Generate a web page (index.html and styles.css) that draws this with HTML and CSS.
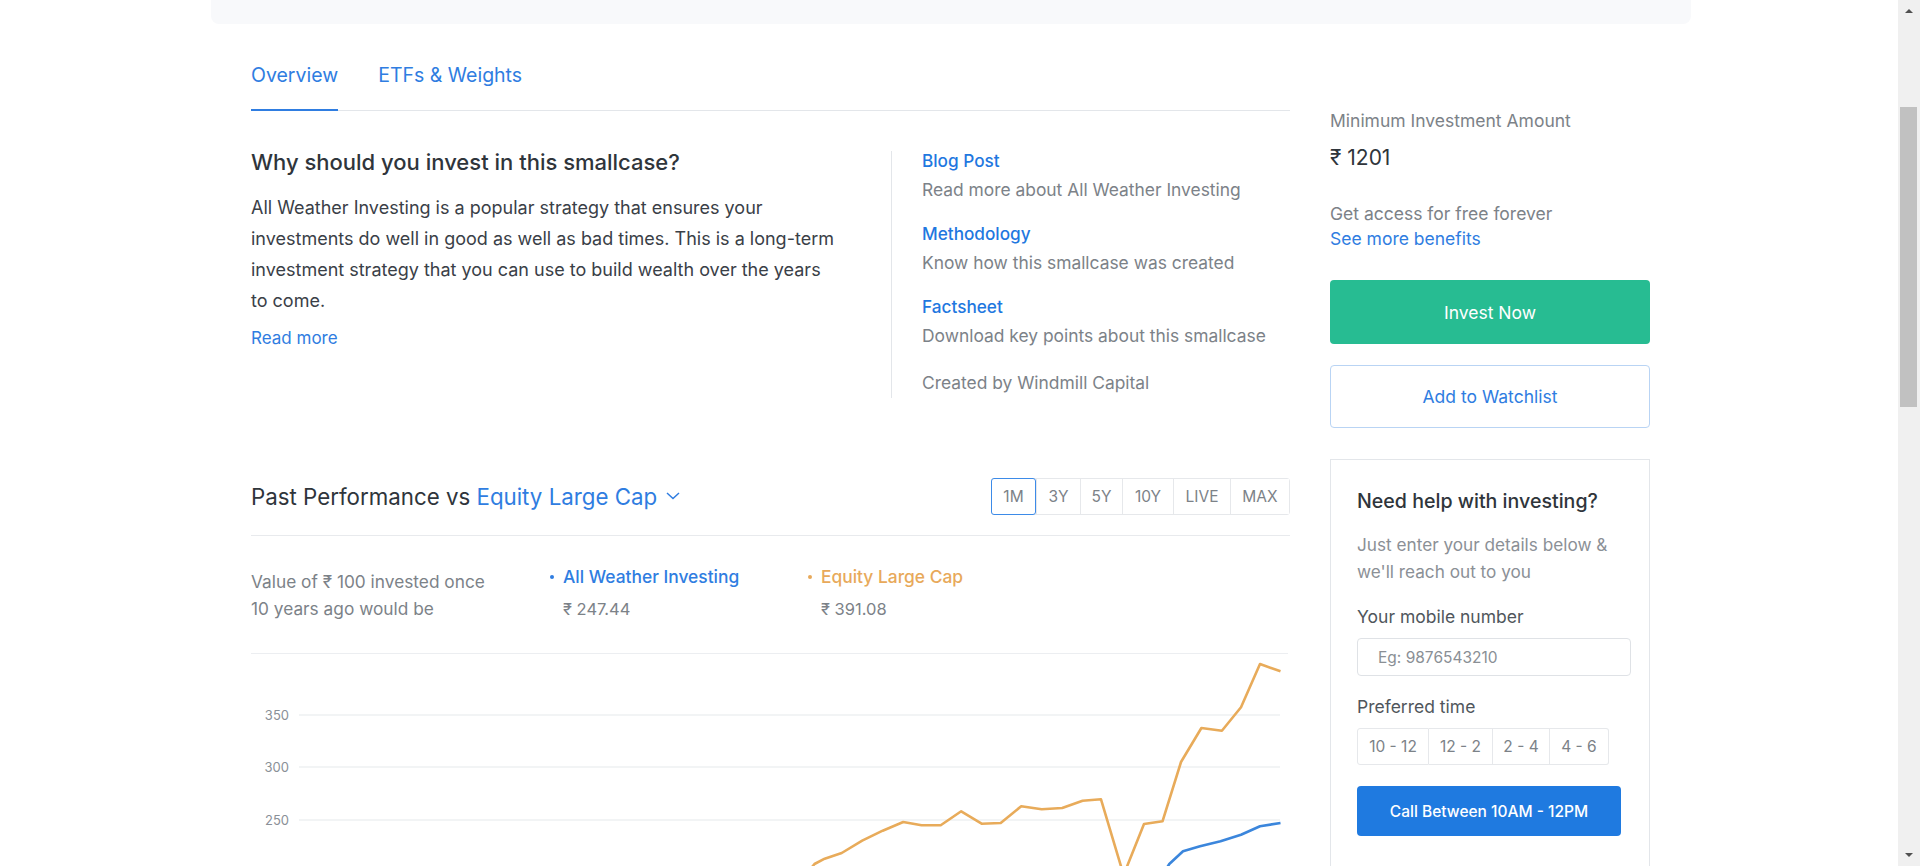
FILE: index.html
```html
<!DOCTYPE html>
<html lang="en">
<head>
<meta charset="utf-8">
<title>All Weather Investing</title>
<link rel="stylesheet" href="styles.css">
</head>
<body>
<div class="viewport">
  <div class="container">
    <div class="topbar"></div>
    <div class="layout">
      <main class="main">
        <nav class="tabs">
          <a class="tab active">Overview</a>
          <a class="tab">ETFs &amp; Weights</a>
        </nav>

        <section class="why">
          <div class="why-left">
            <h2 class="why-title">Why should you invest in this smallcase?</h2>
            <p class="why-text">All Weather Investing is a popular strategy that ensures your<br>investments do well in good as well as bad times. This is a long-term<br>investment strategy that you can use to build wealth over the years<br>to come.</p>
            <a class="read-more">Read more</a>
          </div>
          <div class="why-right">
            <div class="info">
              <a class="info-title">Blog Post</a>
              <div class="info-desc">Read more about All Weather Investing</div>
            </div>
            <div class="info">
              <a class="info-title">Methodology</a>
              <div class="info-desc">Know how this smallcase was created</div>
            </div>
            <div class="info">
              <a class="info-title">Factsheet</a>
              <div class="info-desc">Download key points about this smallcase</div>
            </div>
            <div class="created">Created by Windmill Capital</div>
          </div>
        </section>

        <section class="perf">
          <div class="perf-head">
            <h3 class="perf-title">Past Performance vs <span class="bench">Equity Large Cap<svg class="chev" width="14" height="8" viewBox="0 0 14 8"><polyline points="1,1 7,6.5 13,1" fill="none" stroke="#2f7de1" stroke-width="1.5"/></svg></span></h3>
            <div class="periods">
              <button class="period active">1M</button>
              <button class="period">3Y</button>
              <button class="period">5Y</button>
              <button class="period">10Y</button>
              <button class="period">LIVE</button>
              <button class="period">MAX</button>
            </div>
          </div>
          <div class="stats">
            <div class="stats-label">Value of ₹ 100 invested once<br>10 years ago would be</div>
            <div class="legend">
              <div class="legend-name blue"><span class="dot"></span>All Weather Investing</div>
              <div class="legend-val">₹ 247.44</div>
            </div>
            <div class="legend">
              <div class="legend-name orange"><span class="dot"></span>Equity Large Cap</div>
              <div class="legend-val">₹ 391.08</div>
            </div>
          </div>
          <div class="chart">
            <svg width="1039" height="240" viewBox="0 0 1039 240">
              <line x1="0" y1="0.5" x2="1037" y2="0.5" stroke="#eceef1" stroke-width="1"/>
              <line x1="48" y1="62" x2="1029" y2="62" stroke="#eef0f2" stroke-width="1.5"/>
              <line x1="48" y1="114" x2="1029" y2="114" stroke="#eef0f2" stroke-width="1.5"/>
              <line x1="48" y1="167" x2="1029" y2="167" stroke="#eef0f2" stroke-width="1.5"/>
              <text class="axis" x="38" y="66.5" text-anchor="end">350</text>
              <text class="axis" x="38" y="118.5" text-anchor="end">300</text>
              <text class="axis" x="38" y="171.5" text-anchor="end">250</text>
              <polyline fill="none" stroke="#e8ab5a" stroke-width="2.6" stroke-linejoin="round" points="540,240 563.5,211 573.7,205.7 590.7,200 611.2,187.7 631.7,177.7 652.2,169 670.6,172.3 689.7,172.3 710.2,158.3 730.6,170.7 749.7,170 770.2,153.3 790.7,156.3 811.2,155 831.6,147.7 850,146.3 872.6,222 893,171 911.5,168.3 930,109 950.4,75 970.9,77.7 990,54.3 1009,11 1029.5,18.3"/>
              <polyline fill="none" stroke="#3b86dc" stroke-width="2.6" stroke-linejoin="round" points="900,240 918.3,211 932,198.3 949,193.3 969.5,188.3 990,181.7 1009,173.3 1029.5,170"/>
            </svg>
          </div>
        </section>
      </main>

      <aside class="side">
        <div class="min-label">Minimum Investment Amount</div>
        <div class="min-amount">₹ 1201</div>
        <div class="access">Get access for free forever</div>
        <a class="benefits">See more benefits</a>
        <button class="btn-invest">Invest Now</button>
        <button class="btn-watch">Add to Watchlist</button>

        <div class="help">
          <h4 class="help-title">Need help with investing?</h4>
          <p class="help-text">Just enter your details below &amp;<br>we'll reach out to you</p>
          <label class="help-label">Your mobile number</label>
          <input class="help-input" type="text" placeholder="Eg: 9876543210">
          <div class="help-label time-label">Preferred time</div>
          <div class="times">
            <button class="time t1">10 - 12</button>
            <button class="time t2">12 - 2</button>
            <button class="time t3">2 - 4</button>
            <button class="time t4">4 - 6</button>
          </div>
          <button class="btn-call">Call Between 10AM - 12PM</button>
        </div>
      </aside>
    </div>
  </div>
</div>

<div class="scrollbar">
  <span class="arrow up"></span>
  <span class="thumb"></span>
  <span class="arrow down"></span>
</div>
</body>
</html>
```

FILE: styles.css
```css
* { box-sizing: border-box; }

html, body {
  margin: 0;
  padding: 0;
  height: 100%;
  overflow: hidden;
  background: #ffffff;
}

body {
  font-family: "Inter", "Liberation Sans", Arial, sans-serif;
  color: #2f353b;
}

.viewport {
  margin-right: 18px;
}

.container {
  width: 1480px;
  margin: 0 auto;
}

.topbar {
  height: 24px;
  background: #f8f9fb;
  border-radius: 0 0 8px 8px;
}

.layout {
  display: flex;
  align-items: flex-start;
  gap: 40px;
  padding: 39px 40px 0 40px;
}

.main {
  width: 1039px;
  flex: 0 0 1039px;
}

/* Tabs */
.tabs {
  display: flex;
  gap: 40px;
  border-bottom: 1px solid #e3e6ea;
}

.tab {
  font-size: 19.5px;
  line-height: 24px;
  color: #2f7de1;
  padding-bottom: 22px;
  border-bottom: 2px solid transparent;
  margin-bottom: -1px;
  cursor: pointer;
}

.tab.active {
  border-bottom-color: #2f7de1;
}

/* Why section */
.why {
  display: flex;
  padding-top: 40px;
}

.why-left {
  flex: 0 0 640px;
  padding-right: 30px;
}

.why-title {
  margin: 0;
  font-size: 22px;
  line-height: 22px;
  font-weight: 500;
  color: #2f353b;
}

.why-text {
  margin: 19px 0 0 0;
  font-size: 18px;
  line-height: 31px;
  color: #3a4047;
}

.read-more {
  display: block;
  margin-top: 11px;
  font-size: 17px;
  line-height: 22px;
  color: #2f7de1;
}

.why-right {
  flex: 1;
  border-left: 1px solid #e3e6ea;
  padding-left: 30px;
  padding-bottom: 4px;
}

.info + .info {
  margin-top: 23px;
}

.info-title {
  display: block;
  font-size: 17.2px;
  line-height: 20px;
  font-weight: 500;
  color: #1f78e0;
}

.info-desc {
  margin-top: 8px;
  font-size: 17.4px;
  line-height: 22px;
  color: #7c8288;
}

.created {
  margin-top: 25px;
  font-size: 17.4px;
  line-height: 22px;
  color: #7c8288;
}

/* Performance */
.perf {
  margin-top: 80px;
}

.perf-head {
  display: flex;
  align-items: center;
  justify-content: space-between;
  padding-bottom: 20px;
  border-bottom: 1px solid #e8eaed;
}

.perf-title {
  margin: 0;
  font-size: 22.3px;
  font-weight: 400;
  line-height: 26px;
  color: #2f353b;
}

.bench {
  color: #2f7de1;
}

.chev {
  margin-left: 9px;
  vertical-align: 5px;
}

.periods {
  display: flex;
  border: 1px solid #e6e8eb;
  border-radius: 3px;
  height: 37px;
}

.period {
  font-family: inherit;
  font-size: 15.5px;
  color: #7c8288;
  background: #fff;
  border: none;
  border-left: 1px solid #e6e8eb;
  padding: 0;
  height: 35px;
}

.period:first-child { border-left: none; }
.period:nth-child(2) { width: 44px; }
.period:nth-child(3) { width: 42px; }
.period:nth-child(4) { width: 51px; }
.period:nth-child(5) { width: 57px; }
.period:nth-child(6) { width: 59px; }

.period.active {
  border: 1px solid #3d8be8;
  border-radius: 3px;
  height: 37px;
  margin: -1px 0 -1px -1px;
  width: 45px;
}

.stats {
  display: grid;
  grid-template-columns: 298px 258px auto;
  padding-top: 31.5px;
}

.stats-label {
  font-size: 17.3px;
  line-height: 27px;
  color: #7c8288;
}

.legend-name {
  position: relative;
  padding-left: 14px;
  font-size: 17.4px;
  line-height: 22px;
  font-weight: 500;
  margin-top: -1.5px;
}

.legend-name .dot {
  position: absolute;
  left: 1px;
  top: 9px;
  width: 4px;
  height: 4px;
  border-radius: 50%;
}

.legend-name.blue { color: #2f7de1; }
.legend-name.blue .dot { background: #2f7de1; }
.legend-name.orange { color: #e8a95a; }
.legend-name.orange .dot { background: #e8a95a; }

.legend-val {
  padding-left: 14px;
  margin-top: 10px;
  font-size: 16.5px;
  line-height: 22px;
  color: #7c8288;
}

.chart {
  margin-top: 31px;
  height: 240px;
}

.chart svg { display: block; }

.axis {
  font-family: "Inter", "Liberation Sans", Arial, sans-serif;
  font-size: 13px;
  fill: #8a9097;
}

/* Sidebar */
.side {
  width: 320px;
  flex: 0 0 320px;
  padding-top: 47px;
}

.min-label {
  font-size: 17.5px;
  line-height: 22px;
  color: #7c8288;
}

.min-amount {
  margin-top: 13px;
  font-size: 21px;
  line-height: 26px;
  color: #2f353b;
}

.access {
  margin-top: 31px;
  font-size: 17.5px;
  line-height: 24px;
  color: #7c8288;
}

.benefits {
  display: block;
  font-size: 17.5px;
  line-height: 25px;
  color: #2f7de1;
}

.btn-invest {
  display: block;
  width: 320px;
  height: 64px;
  margin-top: 29px;
  border: none;
  border-radius: 4px;
  background: #27bc92;
  color: #ffffff;
  font-family: inherit;
  font-size: 17.5px;
}

.btn-watch {
  display: block;
  width: 320px;
  height: 63px;
  margin-top: 21px;
  border: 1px solid #b9d4f4;
  border-radius: 4px;
  background: #ffffff;
  color: #2f7de1;
  font-family: inherit;
  font-size: 17.5px;
}

.help {
  margin-top: 31px;
  border: 1px solid #e3e6ea;
  padding: 28px 18px 60px 26px;
}

.help-title {
  margin: 0;
  font-size: 19.6px;
  line-height: 26px;
  font-weight: 500;
  color: #2f353b;
}

.help-text {
  margin: 17px 0 0 0;
  font-size: 17.2px;
  line-height: 27px;
  color: #8b9096;
}

.help-label {
  display: block;
  margin-top: 20px;
  font-size: 17.5px;
  line-height: 24px;
  color: #50565c;
}

.help-input {
  display: block;
  margin-top: 9px;
  width: 274px;
  height: 38px;
  border: 1px solid #dfe2e6;
  border-radius: 4px;
  padding: 0 0 0 20px;
  font-family: inherit;
  font-size: 15.5px;
  color: #2f353b;
  outline: none;
}

.help-input::placeholder {
  color: #8a8f95;
}

.time-label {
  margin-top: 19px;
}

.times {
  display: flex;
  margin-top: 9px;
}

.time {
  height: 37px;
  border: 1px solid #e6e8eb;
  background: #ffffff;
  color: #7c8288;
  font-family: inherit;
  font-size: 15.5px;
  padding: 0;
}

.time + .time { border-left: none; }
.time.t1 { width: 72px; border-radius: 3px 0 0 3px; }
.time.t2 { width: 64px; }
.time.t3 { width: 57px; }
.time.t4 { width: 59px; border-radius: 0 3px 3px 0; }

.btn-call {
  display: block;
  margin-top: 21px;
  width: 264px;
  height: 50px;
  border: none;
  border-radius: 4px;
  background: #1f7ae0;
  color: #ffffff;
  font-family: inherit;
  font-size: 15.5px;
  font-weight: 500;
}

/* Fake window scrollbar */
.scrollbar {
  position: fixed;
  top: 0;
  right: 0;
  width: 22px;
  height: 100%;
  background: #f0f0f0;
}

.scrollbar .thumb {
  position: absolute;
  left: 2px;
  width: 17px;
  top: 107px;
  height: 300px;
  background: #c1c1c1;
}

.scrollbar .arrow {
  position: absolute;
  left: 7px;
  width: 0;
  height: 0;
  border-left: 4px solid transparent;
  border-right: 4px solid transparent;
}

.scrollbar .arrow.up {
  top: 9px;
  border-bottom: 4px solid #505050;
}

.scrollbar .arrow.down {
  bottom: 9px;
  border-top: 4px solid #505050;
}
```
